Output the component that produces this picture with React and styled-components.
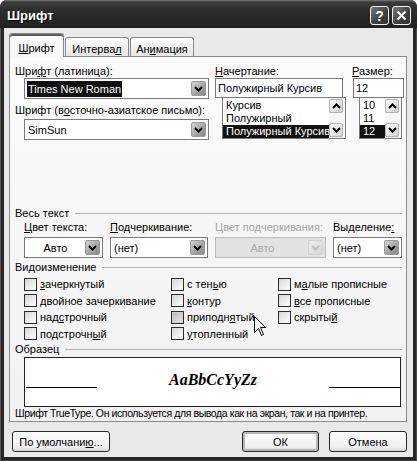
import React from 'react'
import styled, { createGlobalStyle } from 'styled-components'

const GlobalStyle = createGlobalStyle`
  html, body {
    margin: 0;
    padding: 0;
    background: #fff;
  }
  body {
    font-family: "Liberation Sans", Arial, sans-serif;
    font-size: 11px;
    color: #000;
  }
`

const Window = styled.div`
  position: relative;
  width: 417px;
  height: 461px;
  box-sizing: border-box;
  padding-bottom: 4px;
  background: #262626;
  border-radius: 7px 7px 0 0;
  display: flex;
  flex-direction: column;
  overflow: hidden;
  box-shadow: inset 1px 0 0 #5a5a5a, inset -1px 0 0 #4a4a4a, inset 0 -1px 0 #3a3a3a;
`

const TitleBar = styled.div`
  height: 28px;
  flex: none;
  display: flex;
  align-items: center;
  padding: 0 6px 0 7px;
  border-radius: 7px 7px 0 0;
  background: linear-gradient(#7a7a7a 0, #3c3c3c 2px, #2e2e2e 35%, #202020 100%);
`

const Title = styled.div`
  font-size: 13px;
  font-weight: bold;
  color: #fff;
  padding-top: 3px;
  text-shadow: 1px 1px 0 #000;
`

const TitleButtons = styled.div`
  margin-left: auto;
  display: flex;
  gap: 3px;
  padding-top: 3px;
`

const TitleButton = styled.div`
  width: 19px;
  height: 19px;
  box-sizing: border-box;
  border: 1px solid #f0f0f0;
  border-radius: 3px;
  background: linear-gradient(135deg, #7a7a7a, #3e3e3e 60%, #333);
  display: flex;
  align-items: center;
  justify-content: center;
  color: #fff;
  font-size: 14px;
  font-weight: bold;
`

const Body = styled.div`
  flex: 1;
  margin: 0 4px;
  background: #e9e9e9;
  padding: 5px 6px 0 5px;
  display: flex;
  flex-direction: column;
`

const Tabs = styled.div`
  height: 24px;
  display: flex;
  align-items: flex-end;
  position: relative;
  z-index: 1;
`

const Tab = styled.div`
  box-sizing: border-box;
  width: ${p => p.$width}px;
  height: ${p => (p.$active ? 24 : 19)}px;
  margin-left: ${p => (p.$active ? 0 : 1)}px;
  margin-bottom: ${p => (p.$active ? 0 : 1)}px;
  padding-top: ${p => (p.$active ? 7 : 4)}px;
  line-height: 14px;
  text-align: center;
  border: 1px solid #8a8a8a;
  border-bottom: none;
  border-radius: 3px 3px 0 0;
  background: ${p => (p.$active ? '#f8f8f8' : 'linear-gradient(#fdfdfd, #e6e6e6)')};
  box-shadow: ${p => (p.$active ? 'inset 0 2px 0 #5a5a5a' : 'none')};
`

const Panel = styled.div`
  margin-top: -1px;
  height: 366px;
  box-sizing: border-box;
  border: 1px solid #8a8a8a;
  background: linear-gradient(#fbfbfb, #f1f1f1);
  padding: 7px 2px 0 5px;
  display: flex;
  flex-direction: column;
`

const TopRow = styled.div`
  display: flex;
  gap: 6px;
`

const Column = styled.div`
  width: ${p => p.$width}px;
  display: flex;
  flex-direction: column;
`

const Label = styled.div`
  height: 14px;
  line-height: 14px;
  white-space: nowrap;
  margin-top: ${p => p.$top || 0}px;
  color: ${p => (p.$disabled ? '#a4a4a4' : '#000')};
`

const Select = styled.div`
  box-sizing: border-box;
  display: flex;
  align-items: center;
  height: 21px;
  width: ${p => (p.$width ? `${p.$width}px` : 'auto')};
  margin-left: ${p => p.$left || 0}px;
  margin-top: ${p => p.$top || 0}px;
  border: 1px solid ${p => (p.$disabled ? '#bcbcbc' : '#7a7a7a')};
  background: ${p => (p.$disabled ? '#e2e2e2' : '#fff')};
  padding: 0 2px 0 1px;
`

const SelectText = styled.div`
  flex: 1;
  white-space: nowrap;
  overflow: hidden;
  padding-left: ${p => (p.$center ? 0 : 2)}px;
  text-align: ${p => (p.$center ? 'center' : 'left')};
  color: ${p => (p.$disabled ? '#a8a8a8' : '#000')};
`

const Highlight = styled.span`
  display: inline-block;
  background: #111;
  color: #fff;
  line-height: 16px;
  padding: 0 1px;
  margin-left: -1px;
`

const DropButton = styled.div`
  box-sizing: border-box;
  width: 15px;
  height: 15px;
  border-radius: 2px;
  border: 1px solid ${p => (p.$disabled ? '#d2d2d2' : '#9a9a9a')};
  background: ${p => (p.$disabled ? 'linear-gradient(135deg, #ececec, #d6d6d6)' : 'linear-gradient(135deg, #d4d4d4, #9a9a9a 70%, #8a8a8a)')};
  display: flex;
  align-items: center;
  justify-content: center;
`

const TextBox = styled.div`
  box-sizing: border-box;
  height: 20px;
  width: ${p => p.$width}px;
  margin-left: ${p => p.$left || 0}px;
  border: 1px solid #7a7a7a;
  background: #fff;
  padding-left: 2px;
  line-height: 18px;
  white-space: nowrap;
`

const ListBox = styled.div`
  box-sizing: border-box;
  height: 42px;
  width: ${p => p.$width}px;
  margin-left: ${p => p.$left}px;
  margin-top: -1px;
  border: 1px solid #7a7a7a;
  background: #fff;
  display: flex;
`

const ListItems = styled.div`
  flex: 1;
  padding-top: 1px;
  overflow: hidden;
`

const ListItem = styled.div`
  height: 13px;
  line-height: 13px;
  padding-left: 3px;
  white-space: nowrap;
  background: ${p => (p.$selected ? '#111' : 'transparent')};
  color: ${p => (p.$selected ? '#fff' : '#000')};
`

const ScrollBar = styled.div`
  width: 15px;
  display: flex;
  flex-direction: column;
  justify-content: space-between;
  padding: 1px 1px 1px 0;
  background: #f6f6f6;
`

const ScrollButton = styled.div`
  box-sizing: border-box;
  width: 14px;
  height: 14px;
  border: 1px solid #b2b2b2;
  border-radius: 2px;
  background: linear-gradient(135deg, #fafafa, #d2d2d2);
  display: flex;
  align-items: center;
  justify-content: center;
`

const GroupHeader = styled.div`
  display: flex;
  align-items: center;
  height: 14px;
  line-height: 14px;
  margin-top: ${p => p.$top || 0}px;
`

const GroupLine = styled.div`
  flex: 1;
  height: 1px;
  margin: 1px 2px 0 6px;
  background: #b4b4b4;
`

const FieldsRow = styled.div`
  margin-left: 9px;
  display: grid;
  grid-template-columns: 79px 98px 111px 69px;
  column-gap: 7px;
`

const Field = styled.div`
  display: flex;
  flex-direction: column;
`

const CheckGrid = styled.div`
  margin: 2px 0 0 9px;
  display: grid;
  grid-template-columns: 147px 107px 1fr;
  grid-auto-rows: 16.5px;
`

const CheckItem = styled.div`
  display: flex;
  align-items: center;
  gap: 3px;
  white-space: nowrap;
`

const CheckBox = styled.div`
  box-sizing: border-box;
  width: 13px;
  height: 13px;
  flex: none;
  border: 1px solid #2c2c2c;
  background: ${p => (p.$hover ? 'linear-gradient(135deg, #b8b8b8, #e8e8e8)' : 'linear-gradient(135deg, #d6d6d6, #ffffff)')};
  box-shadow: ${p => (p.$hover ? 'inset 0 0 0 1px #cfcfcf' : 'none')};
`

const Sample = styled.div`
  box-sizing: border-box;
  margin: 1px 0 0 9px;
  width: 377px;
  height: 50px;
  border: 1px solid #222;
  background: #fff;
  display: flex;
  align-items: flex-start;
`

const SampleLine = styled.div`
  width: 71px;
  height: 1px;
  margin-top: 29px;
  margin-left: ${p => p.$left || 0}px;
  background: #000;
`

const SampleText = styled.div`
  flex: 1;
  margin-top: 13px;
  text-align: center;
  font-family: "Liberation Serif", "Times New Roman", serif;
  font-weight: bold;
  font-style: italic;
  font-size: 16px;
  line-height: 18px;
`

const Info = styled.div`
  font-size: 10.5px;
  letter-spacing: -0.4px;
  line-height: 13px;
  white-space: nowrap;
`

const ButtonRow = styled.div`
  display: flex;
  margin-top: 9px;
  height: 21px;
`

const Button = styled.div`
  box-sizing: border-box;
  width: ${p => p.$width}px;
  height: 21px;
  margin-left: ${p => p.$left};
  border: 1px solid #2a2a2a;
  border-radius: 3px;
  background: linear-gradient(#ffffff, #efefef 80%, #d4d4d4);
  box-shadow: ${p => (p.$default ? 'inset 0 0 0 2px #b8b8b8' : 'none')};
  display: flex;
  align-items: center;
  justify-content: center;
  white-space: nowrap;
`

const Cursor = styled.svg`
  position: absolute;
  left: 254px;
  top: 316px;
`

const U = styled.span`
  text-decoration: underline;
  text-underline-offset: 1px;
`

const ChevronDown = ({ color = '#000' }) => (
  <svg width="9" height="6" viewBox="0 0 9 6">
    <polyline points="1,1 4.5,4.5 8,1" fill="none" stroke={color} strokeWidth="2" />
  </svg>
)

const ChevronUp = () => (
  <svg width="9" height="6" viewBox="0 0 9 6">
    <polyline points="1,5 4.5,1.5 8,5" fill="none" stroke="#000" strokeWidth="2" />
  </svg>
)

const checks = [
  [<><U>з</U>ачеркнутый</>, false],
  [<>с тен<U>ь</U>ю</>, false],
  [<>м<U>а</U>лые прописные</>, false],
  [<>двойное зачеркивание</>, false],
  [<><U>к</U>онтур</>, false],
  [<><U>в</U>се прописные</>, false],
  [<>над<U>с</U>трочный</>, false],
  [<>приподн<U>я</U>тый</>, true],
  [<>скрыты<U>й</U></>, false],
  [<>подстрочн<U>ы</U>й</>, false],
  [<><U>у</U>топленный</>, false],
]

const ScrollList = ({ items, selected, width, left }) => (
  <ListBox $width={width} $left={left}>
    <ListItems>
      {items.map(item => (
        <ListItem key={item} $selected={item === selected}>{item}</ListItem>
      ))}
    </ListItems>
    <ScrollBar>
      <ScrollButton><ChevronUp /></ScrollButton>
      <ScrollButton><ChevronDown /></ScrollButton>
    </ScrollBar>
  </ListBox>
)

export default function App() {
  return (
    <>
      <GlobalStyle />
      <Window>
        <TitleBar>
          <Title>Шрифт</Title>
          <TitleButtons>
            <TitleButton>?</TitleButton>
            <TitleButton>
              <svg width="11" height="11" viewBox="0 0 11 11">
                <path d="M1.5 1.5 L9.5 9.5 M9.5 1.5 L1.5 9.5" stroke="#fff" strokeWidth="2" />
              </svg>
            </TitleButton>
          </TitleButtons>
        </TitleBar>
        <Body>
          <Tabs>
            <Tab $active $width={55}><U>Ш</U>рифт</Tab>
            <Tab $width={64}>Интерва<U>л</U></Tab>
            <Tab $width={64}>Ан<U>и</U>мация</Tab>
          </Tabs>
          <Panel>
            <TopRow>
              <Column $width={194}>
                <Label>Шри<U>ф</U>т (латиница):</Label>
                <Select $left={9} $width={185}>
                  <SelectText><Highlight>Times New Roman</Highlight></SelectText>
                  <DropButton><ChevronDown /></DropButton>
                </Select>
                <Label $top={4}>Шрифт (в<U>о</U>сточно-азиатское письмо):</Label>
                <Select $left={9} $width={185} $top={2}>
                  <SelectText>SimSun</SelectText>
                  <DropButton><ChevronDown /></DropButton>
                </Select>
              </Column>
              <Column $width={131}>
                <Label><U>Н</U>ачертание:</Label>
                <TextBox $width={128}>Полужирный Курсив</TextBox>
                <ScrollList
                  items={['Курсив', 'Полужирный', 'Полужирный Курсив']}
                  selected="Полужирный Курсив"
                  width={124}
                  left={7}
                />
              </Column>
              <Column $width={51}>
                <Label><U>Р</U>азмер:</Label>
                <TextBox $width={51} $left={1}>12</TextBox>
                <ScrollList items={['10', '11', '12']} selected="12" width={43} left={7} />
              </Column>
            </TopRow>

            <GroupHeader $top={66}>Весь текст<GroupLine /></GroupHeader>
            <FieldsRow>
              <Field>
                <Label><U>Ц</U>вет текста:</Label>
                <Select $top={3}>
                  <SelectText $center>Авто</SelectText>
                  <DropButton><ChevronDown /></DropButton>
                </Select>
              </Field>
              <Field>
                <Label><U>П</U>одчеркивание:</Label>
                <Select $top={3}>
                  <SelectText>(нет)</SelectText>
                  <DropButton><ChevronDown /></DropButton>
                </Select>
              </Field>
              <Field>
                <Label $disabled>Цвет подчеркивания:</Label>
                <Select $top={3} $disabled>
                  <SelectText $center $disabled>Авто</SelectText>
                  <DropButton $disabled><ChevronDown color="#bdbdbd" /></DropButton>
                </Select>
              </Field>
              <Field>
                <Label>Выделение<U>:</U></Label>
                <Select $top={3}>
                  <SelectText>(нет)</SelectText>
                  <DropButton><ChevronDown /></DropButton>
                </Select>
              </Field>
            </FieldsRow>

            <GroupHeader $top={2}>Видоизменение<GroupLine /></GroupHeader>
            <CheckGrid>
              {checks.map(([label, hover], i) => (
                <CheckItem key={i}>
                  <CheckBox $hover={hover} />
                  <span>{label}</span>
                </CheckItem>
              ))}
            </CheckGrid>

            <GroupHeader>Образец<GroupLine /></GroupHeader>
            <Sample>
              <SampleLine $left={1} />
              <SampleText>AaBbCcYyZz</SampleText>
              <SampleLine />
            </Sample>
            <Info>Шрифт TrueType. Он используется для вывода как на экран, так и на принтер.</Info>
          </Panel>
          <ButtonRow>
            <Button $width={98} $left="3px">По умолчани<U>ю</U>...</Button>
            <Button $width={77} $left="auto" $default>ОК</Button>
            <Button $width={78} $left="10px">Отмена</Button>
          </ButtonRow>
        </Body>
        <Cursor width="13" height="21" viewBox="0 0 13 21">
          <path
            d="M0.5 0.5 L0.5 16.5 L4.5 12.5 L7.5 19.5 L9.5 18.5 L6.5 11.5 L11.5 11.5 Z"
            fill="#fff"
            stroke="#000"
            strokeWidth="1"
          />
        </Cursor>
      </Window>
    </>
  )
}
